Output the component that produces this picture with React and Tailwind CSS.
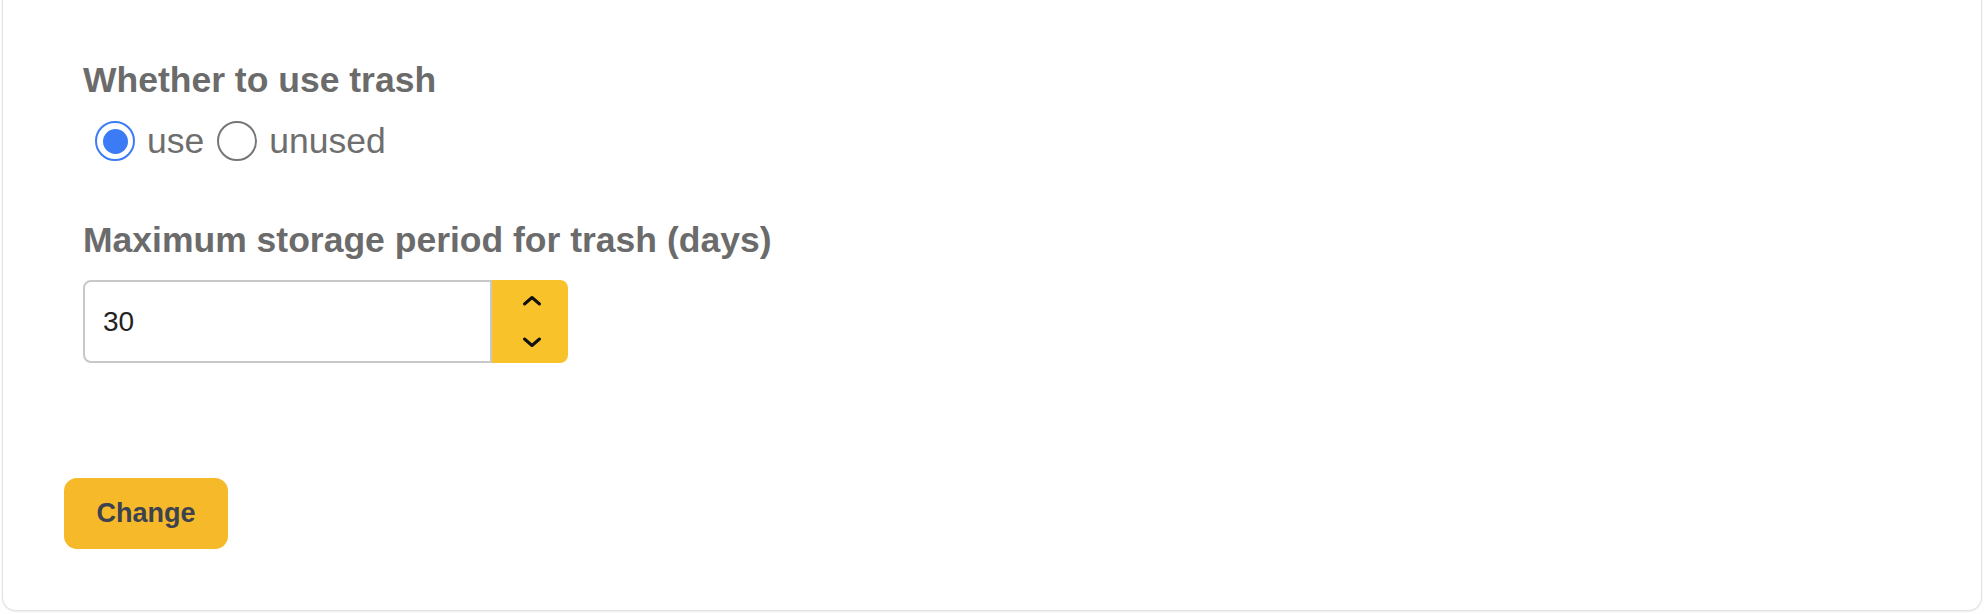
import React, { useState } from "react";

const Radio = ({ checked, onClick }) => (
  <span
    onClick={onClick}
    className={
      "flex h-[40px] w-[40px] shrink-0 items-center justify-center rounded-full border-2 bg-white " +
      (checked ? "border-[#3b7cf6]" : "border-[#767676]")
    }
  >
    {checked && <span className="h-[25px] w-[25px] rounded-full bg-[#3b7cf6]" />}
  </span>
);

const App = () => {
  const [useTrash, setUseTrash] = useState(true);
  const [days, setDays] = useState(30);

  return (
    <div className="min-h-[614px] bg-white font-['Liberation_Sans',Arial,sans-serif]">
      <section className="mx-[2px] rounded-b-[14px] border-x border-b border-[#e3e3e3] bg-white px-[61px] pt-[60px] pb-[61px] shadow-[0_1px_2px_rgba(0,0,0,0.08)]">
        <div className="pl-[19px]">
          <h2 className="text-[35.5px] font-bold leading-[40px] text-[#6b6b6b]">
            Whether to use trash
          </h2>

          <div className="mt-[21px] flex h-[40px] items-center pl-[12px] text-[35.5px] leading-[40px] text-[#6e6e6e]">
            <label className="flex items-center" onClick={() => setUseTrash(true)}>
              <Radio checked={useTrash} />
              <span className="ml-[12px]">use</span>
            </label>
            <label className="ml-[13px] flex items-center" onClick={() => setUseTrash(false)}>
              <Radio checked={!useTrash} />
              <span className="ml-[12px]">unused</span>
            </label>
          </div>

          <h2 className="mt-[59px] text-[35.5px] font-bold leading-[40px] text-[#6b6b6b]">
            Maximum storage period for trash (days)
          </h2>

          <div className="mt-[20px] flex h-[83px] w-[485px]">
            <div className="flex h-full w-[409px] items-center rounded-l-[8px] border-2 border-[#c8c8c8] bg-white pl-[18px] text-[28px] text-[#222]">
              {days}
            </div>
            <div className="flex h-full w-[76px] flex-col items-center justify-center gap-[33px] rounded-r-[8px] bg-[#f8c32a] pl-[3px]">
              <svg
                width="18"
                height="9"
                viewBox="0 0 18 9"
                fill="none"
                stroke="#111"
                strokeWidth="3"
                strokeLinecap="round"
                strokeLinejoin="round"
                className="overflow-visible"
                onClick={() => setDays(days + 1)}
              >
                <path d="M1.5 8 9 1.5 16.5 8" />
              </svg>
              <svg
                width="18"
                height="9"
                viewBox="0 0 18 9"
                fill="none"
                stroke="#111"
                strokeWidth="3"
                strokeLinecap="round"
                strokeLinejoin="round"
                className="overflow-visible"
                onClick={() => setDays(Math.max(0, days - 1))}
              >
                <path d="M1.5 1 9 7.5 16.5 1" />
              </svg>
            </div>
          </div>
        </div>

        <button className="mt-[115px] flex h-[71px] w-[164px] items-center justify-center rounded-[13px] bg-[#f5b92a] text-[27px] font-bold text-[#3c4250]">
          Change
        </button>
      </section>
    </div>
  );
};

export default App;
